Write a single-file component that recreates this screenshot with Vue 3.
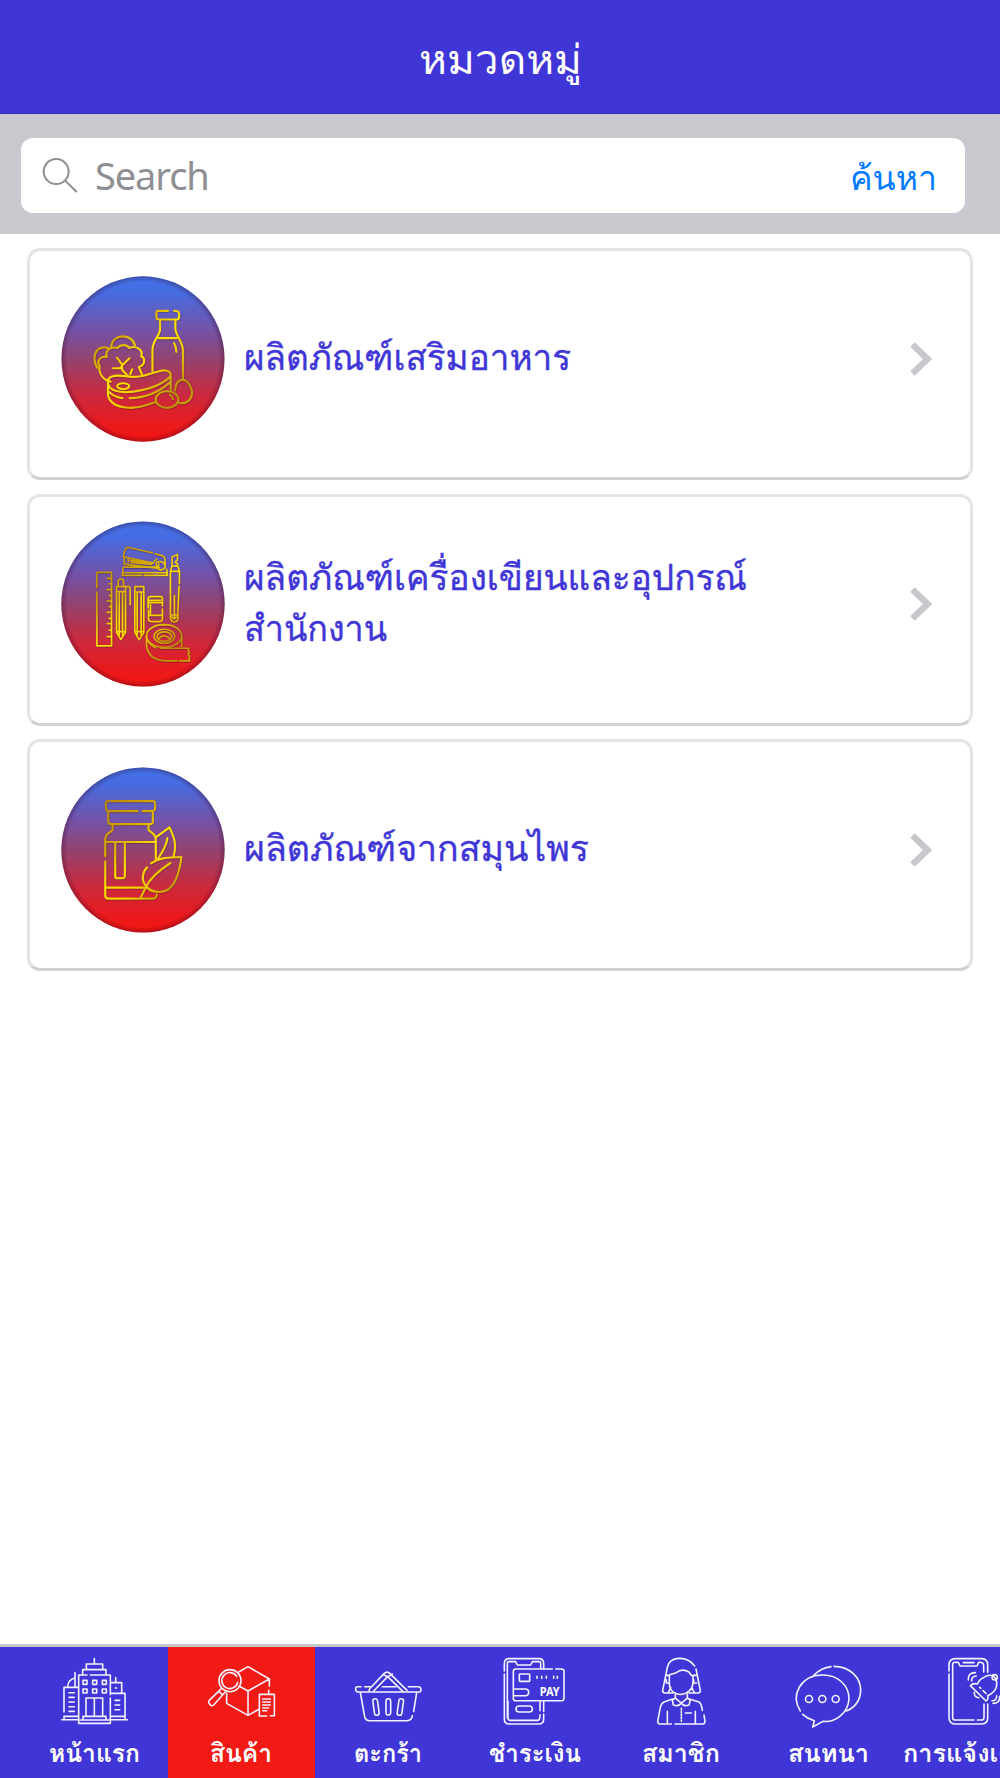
<script setup>
const categories = [
  { id: 'food', lines: [{ text: 'ผลิตภัณฑ์เสริมอาหาร', width: 327 }], box: '62 75 493 500' },
  {
    id: 'office',
    lines: [
      { text: 'ผลิตภัณฑ์เครื่องเขียนและอุปกรณ์', width: 503 },
      { text: 'สำนักงาน', width: 143 },
    ],
    box: '62 62 493 498',
  },
  { id: 'herb', lines: [{ text: 'ผลิตภัณฑ์จากสมุนไพร', width: 345 }], box: '62 48 493 498' },
]

const tabs = [
  { id: 'home', label: 'หน้าแรก', width: 91, box: '184 84 200 200' },
  { id: 'product', label: 'สินค้า', width: 62, box: '624 84 200 200', active: true },
  { id: 'cart', label: 'ตะกร้า', width: 68, box: '134 84 200 200' },
  { id: 'pay', label: 'ชำระเงิน', width: 92, box: '574 84 200 200' },
  { id: 'member', label: 'สมาชิก', width: 78, box: '84 84 200 200' },
  { id: 'chat', label: 'สนทนา', width: 81, box: '524 84 200 200' },
  { id: 'notify', label: 'การแจ้งเตือน', width: 144, box: '964 84 200 200' },
]
</script>

<template>
  <div class="app">
    <header class="header">
      <svg class="label" width="163" height="60"><text x="0" y="44" textLength="163" lengthAdjust="spacingAndGlyphs">หมวดหมู่</text></svg>
    </header>

    <div class="search-bar">
      <div class="field">
        <svg class="lens" viewBox="126 176 108 110" width="36" height="36.7">
          <circle cx="168.500" cy="219.500" r="37.500" />
          <path d="M195 246 L230 281" />
        </svg>
        <span class="placeholder">Search</span>
        <svg class="label go" width="87" height="60"><text x="0" y="44" textLength="87" lengthAdjust="spacingAndGlyphs">ค้นหา</text></svg>
      </div>
    </div>

    <main class="list">
      <section v-for="c in categories" :key="c.id" class="card">
        <svg class="badge" :viewBox="c.box" width="164" height="166">
          <defs>
            <linearGradient :id="'bg-' + c.id" x1="0" y1="0" x2="0" y2="1">
              <stop offset="0" stop-color="#4173ec" />
              <stop offset=".1" stop-color="#476be0" />
              <stop offset=".33" stop-color="#7552a6" />
              <stop offset=".5" stop-color="#92436f" />
              <stop offset=".72" stop-color="#cb293d" />
              <stop offset=".9" stop-color="#ea1a1c" />
              <stop offset="1" stop-color="#f51510" />
            </linearGradient>
            <linearGradient :id="'gold-' + c.id" gradientUnits="userSpaceOnUse" x1="170" y1="160" x2="450" y2="470">
              <stop offset="0" stop-color="#b5820a" />
              <stop offset=".28" stop-color="#d5a900" />
              <stop offset=".48" stop-color="#ffe100" />
              <stop offset=".64" stop-color="#f3cf00" />
              <stop offset=".85" stop-color="#b98d0c" />
              <stop offset="1" stop-color="#cba00a" />
            </linearGradient>
            <radialGradient :id="'rim-' + c.id">
              <stop offset=".93" stop-color="#300020" stop-opacity="0" />
              <stop offset="1" stop-color="#300020" stop-opacity=".32" />
            </radialGradient>
          </defs>
          <g v-if="c.id === 'food'">
            <ellipse cx="308.500" cy="325" rx="245.500" ry="249" :fill="`url(#bg-${c.id})`" />
            <ellipse cx="308.500" cy="325" rx="245.500" ry="249" :fill="`url(#rim-${c.id})`" />
            <g class="art" :stroke="`url(#gold-${c.id})`">
              <path d="M384 180 H352 Q349 180 349 184 V200 Q350 206 356 206 H411 Q417 205 417 199 V186 Q416 180 402 180" />
              <path d="M360 207 V235 C359 256 337 270 337 297 V363 M406 207 V234 C407 255 429 274 429 300 V387 M355 262 H411 M402 277 Q409 289 409 304" />
              <path d="M213 288 C216 247 276 247 284 284 M170 351 C156 327 161 289 193 290 Q202 290 207 295" />
              <path d="M211 393 C184 388 174 362 178 348 C167 331 181 315 199 319 C194 299 211 286 231 292 C242 279 261 281 267 292 C288 283 310 297 303 317 C316 322 316 344 296 349 L306 373 M230 321 L245 341 L246 358 L263 376 M268 323 L246 344 M218 353 L240 353 L246 344 M276 356 L270 371" />
              <path d="M215 378 C193 386 203 413 223 420 C267 434 352 414 388 381 C401 366 380 355 360 361 C320 373 298 383 256 377 Q228 373 215 378Z M203 402 V432 C210 479 285 477 322 463 L346 455 M392 380 V419 M207 425 Q225 441 247 443 M268 443 Q335 443 388 397" />
              <ellipse cx="249" cy="407" rx="18" ry="9" />
              <ellipse cx="381" cy="447" rx="34" ry="25" />
              <path d="M405 420 C409 378 441 378 454 415 C463 443 439 466 413 455 M389 432 Q398 438 399 446" />
            </g>
          </g>
          <g v-else-if="c.id === 'office'">
            <ellipse cx="308.500" cy="311" rx="245.500" ry="248" :fill="`url(#bg-${c.id})`" />
            <ellipse cx="308.500" cy="311" rx="245.500" ry="248" :fill="`url(#rim-${c.id})`" />
            <g class="art thin" :stroke="`url(#gold-${c.id})`">
              <path d="M170 262 V216 H214 V437 H170 V275 M201 234 H214 M207 250 H214 M201 268 H214 M207 286 H214 M201 302 H214 M207 319 H214 M201 336 H214 M207 354 H214 M201 370 H214 M207 390 H214 M201 409 H214" />
              <path d="M229 259 H267 Q270 260 270 264 V313 M229 259 V396 L242 418 L256 396 V260 M234 258 V242 Q235 236 242 236 Q250 236 250 242 V258 M229 274 H256 M229 394 H256 M237 405 V275 M247 405 V275" />
              <path d="M284 259 H311 V397 L297 419 L284 396Z M284 275 H311 M284 394 H311 M291 276 V405 M303 276 V405" />
              <path d="M336 157 L265 141 Q258 140 254 151 L249 169 L340 188 M344 160 L367 166 Q374 169 375 177 V203 M349 186 Q346 204 360 209 Q378 207 375 194 Q367 179 349 186 M252 172 V191 L348 203 M251 200 H346 M264 174 V186 M272 186 L334 192 M270 180 L317 186 M249 201 L246 225 H304 M312 225 H382 L380 207 M250 217 H377 M357 191 Q352 195 357 201 M342 183 L350 176" />
              <path d="M391 340 V212 L396 197 H413 L418 212 V250 M417 258 L413 341 M391 213 H416 M396 195 V170 L412 162 V179 L405 185 L412 190 V196 M391 340 V353 Q394 365 403 365 Q413 364 414 354 V343 M391 344 H410 M403 286 V352 M396 350 Q403 361 409 350" />
              <path d="M324 323 V295 Q325 289 332 289 H361 Q367 289 367 296 V317 M367 326 V356 Q366 364 359 364 H333 Q325 363 325 356 V330 M326 307 H366 M326 345 H366 M331 313 V340 M326 300 H361" />
              <ellipse cx="372" cy="407" rx="53" ry="34" />
              <ellipse cx="373" cy="408" rx="31" ry="21" />
              <ellipse cx="373" cy="409" rx="22" ry="14" />
              <path d="M358 413 Q370 400 388 414 M319 408 V434 Q324 483 382 482 H410 M417 482 H449 L446 475 L449 469 L444 462 L448 456 L444 450 L446 444 H361 M320 414 Q327 434 347 443 M425 410 V438 M365 373 L377 374" />
            </g>
          </g>
          <g v-else>
            <ellipse cx="308.500" cy="297" rx="245.500" ry="248" :fill="`url(#bg-${c.id})`" />
            <ellipse cx="308.500" cy="297" rx="245.500" ry="248" :fill="`url(#rim-${c.id})`" />
            <g class="art" :stroke="`url(#gold-${c.id})`">
              <path d="M293 180 H204 Q197 179 197 171 V157 Q197 150 204 150 H338 Q345 150 345 157 V171 Q345 180 336 180 H307 M204 182 V212 Q205 219 211 219 H330 Q338 219 338 212 V182" />
              <path d="M217 221 V236 Q215 240 210 243 Q195 251 195 267 V316 M325 221 V236 Q327 240 334 244 Q347 253 347 267 V324 M195 331 V433 Q195 443 205 443 H338 Q350 443 350 431 M197 273 H346 M225 275 V375 Q225 382 231 382 H249 Q254 381 254 375 V275 M197 410 H311" />
              <path d="M350 257 Q379 236 388 229 C398 250 413 280 400 316 M382 261 C378 290 363 307 354 323 M333 337 C361 317 390 320 424 318 C420 350 412 392 390 411 C368 431 333 424 318 406 C302 388 307 363 321 349 M391 336 C365 353 332 379 318 407 L302 440 M318 407 Q332 425 354 422" />
            </g>
          </g>
        </svg>
        <h2 class="name">
          <svg v-for="l in c.lines" :key="l.text" class="label" :width="l.width" height="51"><text x="0" y="37" :textLength="l.width" lengthAdjust="spacingAndGlyphs">{{ l.text }}</text></svg>
        </h2>
        <svg class="chevron" width="22" height="34" viewBox="0 0 22 34"><path d="M2.500 2.500 L17.500 17 L2.500 31.500" /></svg>
      </section>
    </main>

    <nav class="tabs">
      <div v-for="t in tabs" :key="t.id" class="tab" :class="{ active: t.active }">
        <svg class="icon" :viewBox="t.box" width="66.700" height="66.700">
          <g v-if="t.id === 'home'">
            <path d="M284 86 V102 M260 116 V102 H309 V116 M249 133 V119 H319 V133 M237 280 V135 H262 M272 135 H332 V194 M332 204 V280 H237 M186 269 H235 M334 269 H383 M193 246 V172 H235 M226 128 V170 M226 144 Q205 149 204 170 M193 266 V259 H235 M334 190 H376 V266 M334 158 H366 V190 M348 143 V157 M335 259 H376 M238 270 H332 M250 268 V259 H319 V268 M259 257 V204 H309 V257 M284 204 V257 M208 188 H224 M208 202 H224 M208 216 H224 M208 230 H224 M208 244 H224 M346 211 H360 M346 225 H360 M346 239 H360 M347 174 H351" />
            <path d="M250 151 H262 V163 H250Z M279 151 H291 V163 H279Z M308 151 H320 V163 H308Z M250 177 H262 V189 H250Z M279 177 H291 V189 H279Z M308 177 H320 V189 H308Z" />
          </g>
          <g v-else-if="t.id === 'product'">
            <circle cx="690" cy="152" r="33" />
            <path d="M710 139 A24 24 0 1 0 713 157 M665 175 L627 212 Q624 216 628 221 L633 226 Q637 229 641 225 L679 182 M656 183 L667 194" />
            <path d="M716 126 L744 110 L808 147 V168 M717 168 L744 183 L808 147 M744 183 V256 M680 190 V220 L744 256 L774 239 M800 258 H778 V193 H823 V257 H811 M806 181 V193 M788 207 H811 M788 216 H811 M788 225 H811 M788 234 H806 M788 242 H800" />
          </g>
          <g v-else-if="t.id === 'cart'">
            <path d="M152 170 H140 Q136 170 136 177 Q136 186 143 186 H325 Q332 186 332 179 Q332 170 323 170 H294 M163 170 H180 M216 170 H257 M150 188 L163 260 Q166 272 178 272 H290 Q304 272 306 257 M319 188 L310 244" />
            <path d="M176 183 Q176 178 180 174 L221 131 Q228 124 236 128 L290 181 M190 183 L232 140 L278 185 M218 134 L233 140 L246 132" />
            <rect x="227" y="206" width="14" height="49" rx="7" />
            <rect x="190" y="206" width="14" height="50" rx="7" transform="rotate(-8 197 231)" />
            <rect x="263" y="206" width="14" height="50" rx="7" transform="rotate(8 270 231)" />
          </g>
          <g v-else-if="t.id === 'pay'">
            <path d="M584 123 V101 Q584 86 599 86 H687 Q702 86 702 101 V116 M584 132 V267 Q584 282 599 282 H687 Q702 282 702 267 V252 M702 214 V244 M593 264 V99 Q593 95 597 95 H618 L623 105 H663 L668 95 H689 Q693 95 693 100 V115 M595 214 V264 Q595 271 602 271 H684 Q691 271 691 254 M691 214 V242" />
            <path d="M728 117 H618 Q611 117 611 124 V206 Q611 212 618 212 H756 Q763 212 763 204 V124 Q763 117 755 117 H738" />
            <rect x="629" y="132" width="31" height="22" rx="2" />
            <path d="M613 177 H649 Q657 178 657 187 Q657 197 649 197 H613 M682 139 V145 M696 139 V145 M710 139 V145 M732 139 V145 M743 139 V145" />
            <rect x="619" y="228" width="49" height="18" rx="9" />
            <text x="690" y="199" class="pay" textLength="60" lengthAdjust="spacingAndGlyphs">PAY</text>
          </g>
          <g v-else-if="t.id === 'member'">
            <path d="M224 108 C199 75 149 79 142 112 L128 181 Q127 187 134 189 H159 M228 117 L241 181 Q242 187 235 189 H207 M139 136 H147 M139 149 V159 H148 M221 149 V159 H230 M219 136 H231 M148 162 V135 Q154 132 169 128 Q186 114 207 126 Q214 138 219 139 V156 C218 202 151 207 148 162 M152 172 L145 188 M215 172 L223 188" />
            <path d="M166 192 V204 L184 219 L202 204 V192 M166 204 L157 210 L160 225 Q176 231 184 219 Q191 231 207 225 L211 210 L202 204 M158 207 L132 216 Q124 220 121 232 L113 274 Q113 282 120 282 H154 M165 282 H248 Q255 282 255 274 L252 255 M210 208 L237 216 Q244 220 247 241 M142 244 V282 M226 244 V282 M196 249 H214" />
            <path d="M184 235 V274" stroke-dasharray="4 5" />
          </g>
          <g v-else-if="t.id === 'chat'">
            <path d="M540 243 C509 194 542 136 606 135 C650 134 686 164 686 207 C683 252 642 278 608 274 L577 291 L582 272 Q561 266 547 253 M580 136 Q604 113 632 110 M641 109 C687 109 721 142 721 181 Q719 226 678 243" />
            <circle cx="566" cy="207" r="10.500" /><circle cx="606" cy="207" r="10.500" /><circle cx="646" cy="207" r="10.500" />
          </g>
          <g v-else>
            <path d="M988 123 V104 Q989 86 1008 86 H1086 Q1104 87 1104 104 V127 M988 132 V263 Q989 282 1008 282 H1086 Q1104 281 1104 264 V222 M999 264 V101 Q1001 96 1008 97 H1016 L1021 108 H1072 L1077 97 Q1091 95 1092 106 V126 M999 264 Q1000 270 1007 270 H1063 M1073 270 H1087 Q1093 270 1093 260 V222 M1031 98 H1063" />
            <path d="M1091 143 Q1109 132 1120 138 Q1136 149 1129 174 Q1123 188 1104 197 Q1107 210 1099 213 L1052 167 Q1060 158 1073 162 Q1080 147 1091 143 M1064 187 Q1063 203 1078 203 M1046 150 Q1044 128 1067 128 M1056 153 Q1055 139 1070 138 M1117 212 Q1131 213 1131 197 M1120 220 Q1141 220 1140 199 M1080 172 L1083 175 M1090 182 L1099 190" />
            <circle cx="1125" cy="142" r="8" />
          </g>
        </svg>
        <svg class="label" :width="t.width" height="36"><text x="0" y="25" :textLength="t.width" lengthAdjust="spacingAndGlyphs">{{ t.label }}</text></svg>
      </div>
    </nav>
  </div>
</template>

<style>
body {
  margin: 0;
  background: #fff;
  overflow: hidden;
}
</style>

<style scoped>
.app {
  width: 1000px;
  height: 1778px;
  display: flex;
  flex-direction: column;
  overflow: hidden;
  background: #fff;
  font-family: Tahoma, Loma, "Noto Sans Thai", "Noto Sans", sans-serif;
}
.label {
  display: block;
  overflow: visible;
  flex: none;
}
.header {
  height: 114px;
  flex: none;
  box-sizing: border-box;
  padding-top: 30px;
  display: flex;
  justify-content: center;
  background: #4036d7;
  border-bottom: 1px solid #382cc4;
}
.header text {
  fill: #fff;
  font-size: 41px;
  font-weight: 500;
}
.search-bar {
  height: 120px;
  flex: none;
  box-sizing: border-box;
  padding: 24px 35px 21px 21px;
  background: #c9c8ce;
}
.field {
  height: 75px;
  box-sizing: border-box;
  padding: 0 28px 0 21px;
  display: flex;
  align-items: center;
  background: #fff;
  border-radius: 12px;
}
.lens {
  fill: none;
  stroke: #8e8e93;
  stroke-width: 6;
}
.placeholder {
  margin-left: 17px;
  font-family: "Noto Sans", sans-serif;
  font-size: 38px;
  letter-spacing: -1.1px;
  line-height: 75px;
  color: #8e8e93;
}
.go {
  margin-left: auto;
}
.go text {
  fill: #007aff;
  font-size: 34px;
}
.list {
  flex: 1;
  display: flex;
  flex-direction: column;
  gap: 13.5px;
  padding: 14px 27px 0;
}
.card {
  height: 232px;
  flex: none;
  box-sizing: border-box;
  display: flex;
  align-items: center;
  padding: 0 38px 11px 31px;
  border: 3px solid #e4e4e4;
  border-bottom-color: #d0d0d0;
  border-radius: 13px;
  background: #fff;
}
.badge {
  flex: none;
}
.art {
  fill: none;
  stroke-width: 6.5;
  stroke-linecap: round;
  stroke-linejoin: round;
  filter: drop-shadow(1px 2px 1px rgba(50, 10, 30, 0.45));
}
.thin {
  stroke-width: 5;
}
.name {
  margin: 0 0 0 19px;
  font-weight: 400;
}
.name text {
  fill: #4036d7;
  stroke: #4036d7;
  stroke-width: 0.4px;
  font-size: 36px;
}
.chevron {
  margin-left: auto;
  fill: none;
  stroke: #c7c7cc;
  stroke-width: 6.5;
}
.tabs {
  height: 134px;
  flex: none;
  box-sizing: border-box;
  display: flex;
  padding-left: 21.3px;
  border-top: 3px solid #c6c6c8;
  background: #4036d7;
}
.tab {
  width: 146.7px;
  height: 131px;
  flex: none;
  box-sizing: border-box;
  padding-top: 11px;
  display: flex;
  flex-direction: column;
  align-items: center;
  gap: 12px;
}
.active {
  background: #f21a15;
}
.icon {
  flex: none;
  overflow: visible;
  fill: none;
  stroke: #f4f2ff;
  stroke-width: 4.8;
  stroke-linecap: round;
  stroke-linejoin: round;
}
.tab .label text {
  fill: #fff;
  font-size: 25px;
  font-weight: 700;
}
.pay {
  fill: #fff;
  stroke: none;
  font-family: "Noto Sans", sans-serif;
  font-size: 37px;
  font-weight: 700;
}
</style>
